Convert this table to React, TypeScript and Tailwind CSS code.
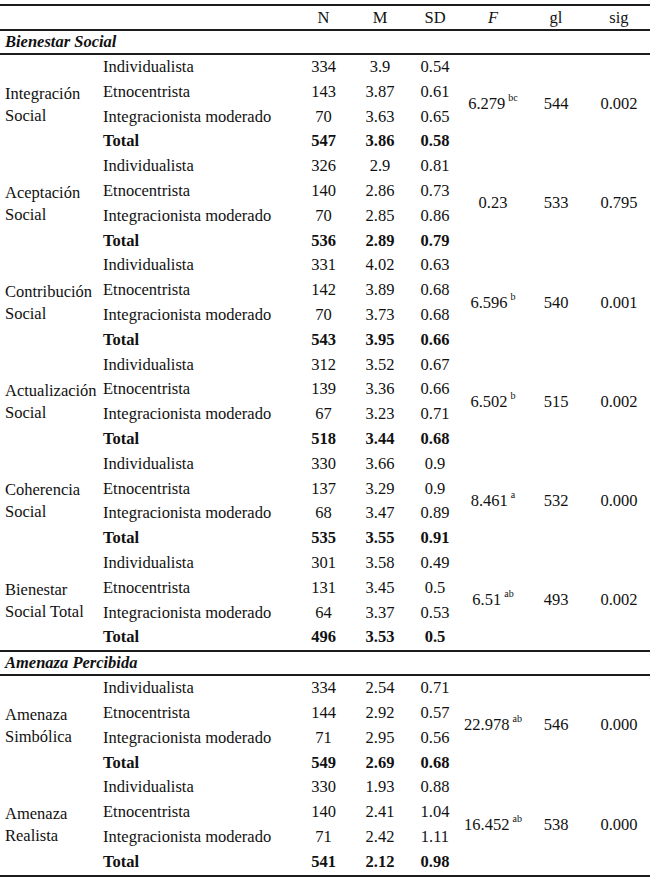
const cols = "grid grid-cols-[100px_195px_57px_56px_54px_62px_64px_62px]";

type Group = {
  label: [string, string];
  rows: [string, string, string][];
  total: [string, string, string];
  f: string;
  sup?: string;
  gl: string;
  sig: string;
};

const subgroups = ["Individualista", "Etnocentrista", "Integracionista moderado"];

const sections: { title: string; groups: Group[] }[] = [
  {
    title: "Bienestar Social",
    groups: [
      { label: ["Integración", "Social"], rows: [["334", "3.9", "0.54"], ["143", "3.87", "0.61"], ["70", "3.63", "0.65"]], total: ["547", "3.86", "0.58"], f: "6.279", sup: "bc", gl: "544", sig: "0.002" },
      { label: ["Aceptación", "Social"], rows: [["326", "2.9", "0.81"], ["140", "2.86", "0.73"], ["70", "2.85", "0.86"]], total: ["536", "2.89", "0.79"], f: "0.23", gl: "533", sig: "0.795" },
      { label: ["Contribución", "Social"], rows: [["331", "4.02", "0.63"], ["142", "3.89", "0.68"], ["70", "3.73", "0.68"]], total: ["543", "3.95", "0.66"], f: "6.596", sup: "b", gl: "540", sig: "0.001" },
      { label: ["Actualización", "Social"], rows: [["312", "3.52", "0.67"], ["139", "3.36", "0.66"], ["67", "3.23", "0.71"]], total: ["518", "3.44", "0.68"], f: "6.502", sup: "b", gl: "515", sig: "0.002" },
      { label: ["Coherencia", "Social"], rows: [["330", "3.66", "0.9"], ["137", "3.29", "0.9"], ["68", "3.47", "0.89"]], total: ["535", "3.55", "0.91"], f: "8.461", sup: "a", gl: "532", sig: "0.000" },
      { label: ["Bienestar", "Social Total"], rows: [["301", "3.58", "0.49"], ["131", "3.45", "0.5"], ["64", "3.37", "0.53"]], total: ["496", "3.53", "0.5"], f: "6.51", sup: "ab", gl: "493", sig: "0.002" },
    ],
  },
  {
    title: "Amenaza Percibida",
    groups: [
      { label: ["Amenaza", "Simbólica"], rows: [["334", "2.54", "0.71"], ["144", "2.92", "0.57"], ["71", "2.95", "0.56"]], total: ["549", "2.69", "0.68"], f: "22.978", sup: "ab", gl: "546", sig: "0.000" },
      { label: ["Amenaza", "Realista"], rows: [["330", "1.93", "0.88"], ["140", "2.41", "1.04"], ["71", "2.42", "1.11"]], total: ["541", "2.12", "0.98"], f: "16.452", sup: "ab", gl: "538", sig: "0.000" },
    ],
  },
];

function GroupBlock({ g }: { g: Group }) {
  const lines = [...g.rows.map((r, i) => ({ name: subgroups[i], vals: r, bold: false })), { name: "Total", vals: g.total, bold: true }];
  return (
    <div className={`${cols} grid-rows-[repeat(4,24.8px)]`}>
      <div className="row-span-4 col-start-1 row-start-1 flex flex-col justify-center pl-[5px] leading-[22px]">
        <span>{g.label[0]}</span>
        <span>{g.label[1]}</span>
      </div>
      {lines.map((l, i) => (
        <div key={i} className={`contents ${l.bold ? "font-bold" : ""}`}>
          <div className="col-start-2 flex items-center pl-[3px]" style={{ gridRow: i + 1 }}>{l.name}</div>
          {l.vals.map((v, j) => (
            <div key={j} className="flex items-center justify-center" style={{ gridRow: i + 1, gridColumn: j + 3 }}>{v}</div>
          ))}
        </div>
      ))}
      <div className="row-span-4 col-start-6 row-start-1 flex items-center justify-center">
        <span>
          {g.f}
          {g.sup && <sup className="ml-[3px] text-[10px] relative -top-[8px]">{g.sup}</sup>}
        </span>
      </div>
      <div className="row-span-4 col-start-7 row-start-1 flex items-center justify-center">{g.gl}</div>
      <div className="row-span-4 col-start-8 row-start-1 flex items-center justify-center">{g.sig}</div>
    </div>
  );
}

export default function App() {
  return (
    <div className="w-[650px] h-[881px] bg-white pt-[4px] text-[#111] text-[16.5px]" style={{ fontFamily: '"Liberation Serif", "Times New Roman", serif' }}>
      <div className="border-t-2 border-b-2 border-[#1c1c1c]">
        <div className={`${cols} h-[23px] items-center`}>
          <div className="col-start-3 text-center">N</div>
          <div className="text-center">M</div>
          <div className="text-center">SD</div>
          <div className="text-center italic">F</div>
          <div className="text-center">gl</div>
          <div className="text-center">sig</div>
        </div>
        {sections.map((s, si) => (
          <div key={si}>
            <div className="h-[26px] flex items-center pl-[5px] font-bold italic border-t-2 border-b-2 border-[#1c1c1c]">{s.title}</div>
            {s.groups.map((g, gi) => (
              <GroupBlock key={gi} g={g} />
            ))}
          </div>
        ))}
      </div>
    </div>
  );
}
